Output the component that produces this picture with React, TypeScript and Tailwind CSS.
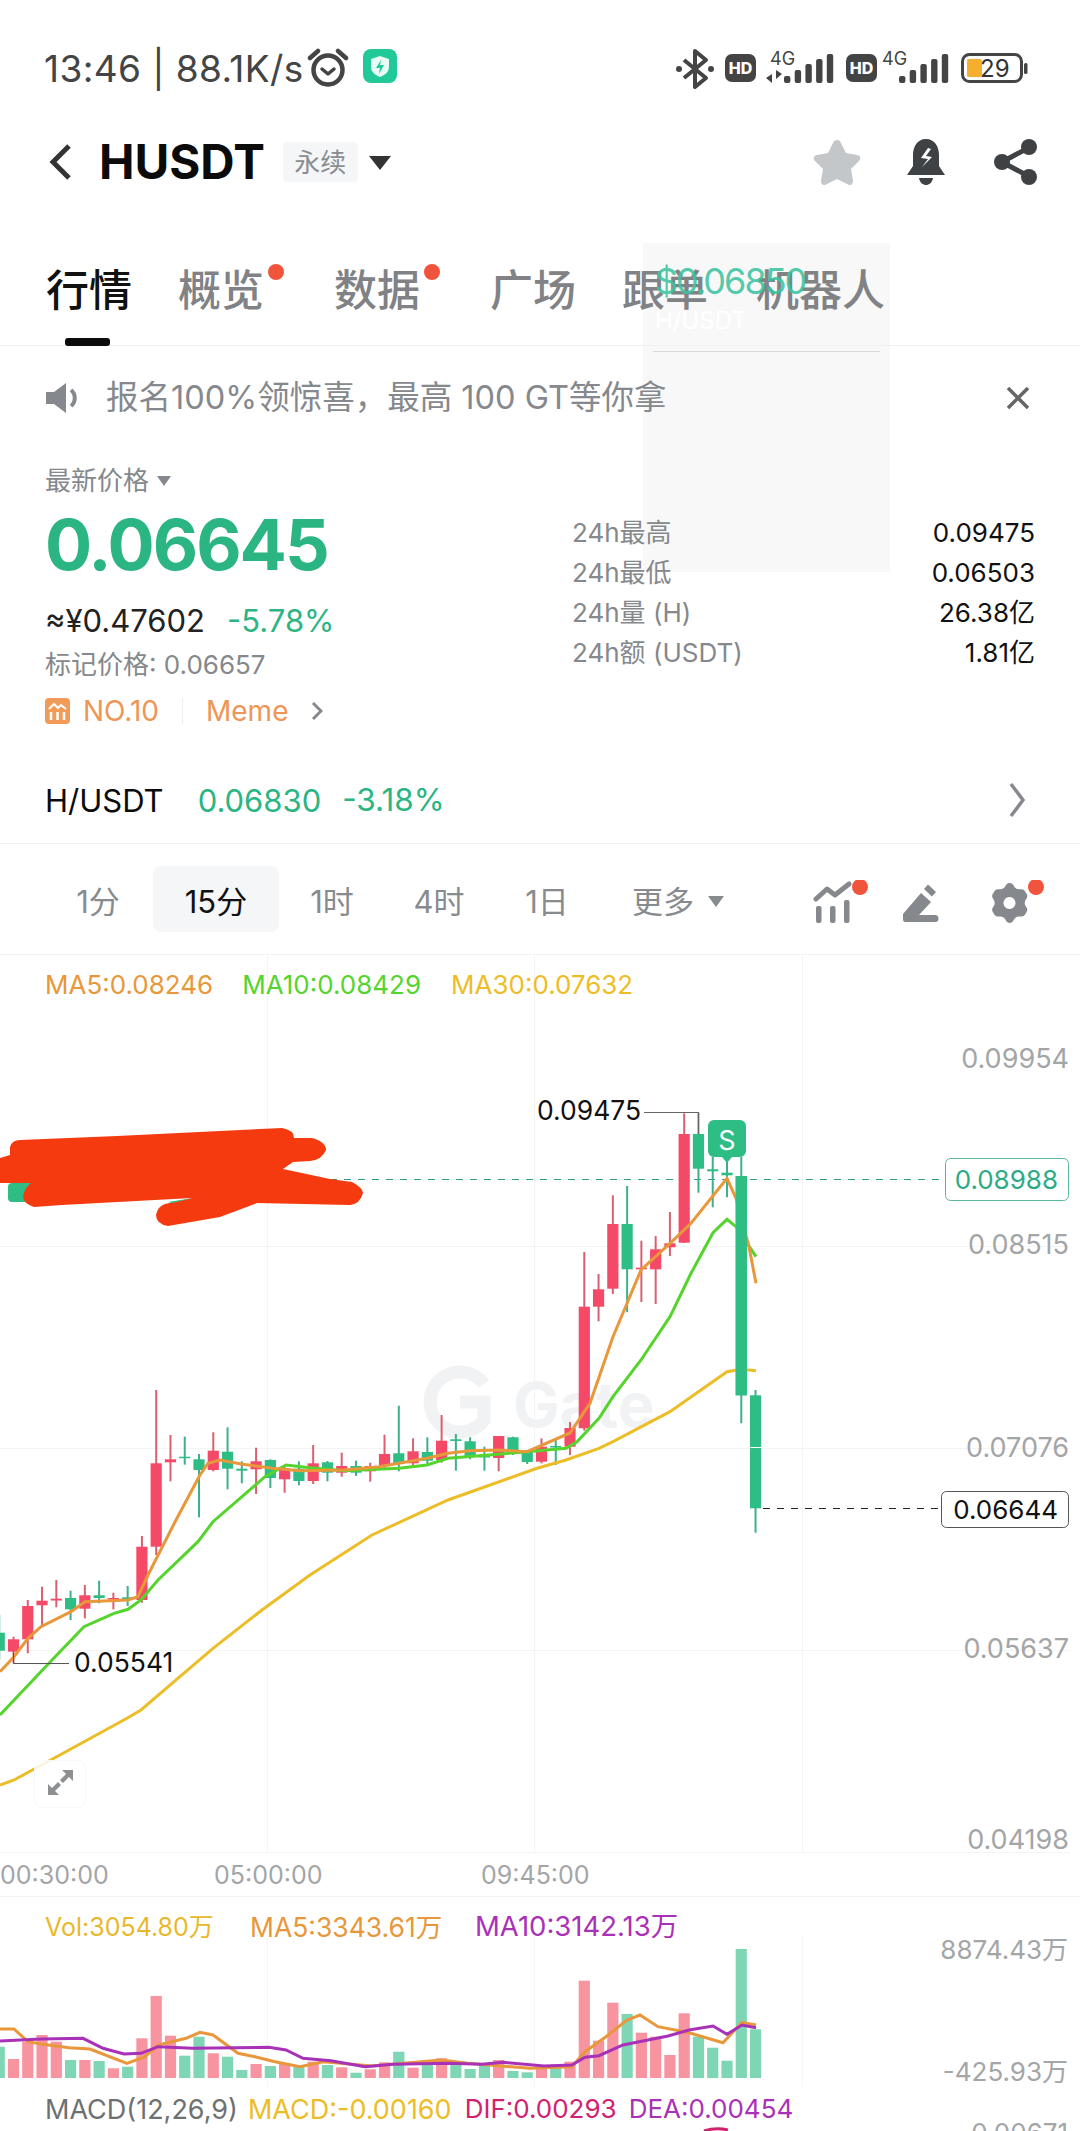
import type { ReactNode } from "react";

const RED = "#f54a67";
const GREEN = "#2dbd85";

// index, wick top, body top, body bottom, wick bottom, all in page px
const candles: [number, "r" | "g", number, number, number, number][] = [
  [-1, "g", 1615, 1632.7, 1650.7, 1660],
  [0, "r", 1636.7, 1639.3, 1651.7, 1663.3],
  [1, "r", 1600, 1606, 1639.3, 1653.3],
  [2, "r", 1586.7, 1600.7, 1605.3, 1626.7],
  [3, "r", 1580, 1598.7, 1600.5, 1607.3],
  [4, "g", 1590.7, 1598, 1609.3, 1620],
  [5, "r", 1585, 1595.3, 1608.7, 1618.3],
  [6, "g", 1580.7, 1595.3, 1598, 1603.3],
  [7, "r", 1592.7, 1598, 1599.5, 1609.3],
  [8, "g", 1586, 1597.3, 1599.3, 1606],
  [9, "r", 1536, 1546.7, 1600, 1602.7],
  [10, "r", 1390, 1463.3, 1546.7, 1555],
  [11, "r", 1435, 1459.3, 1462.3, 1481.3],
  [12, "g", 1436.7, 1456.7, 1458, 1464.7],
  [13, "g", 1454, 1459.3, 1470, 1517.3],
  [14, "r", 1432.3, 1450.7, 1470, 1471.3],
  [15, "g", 1427.3, 1451.7, 1468.7, 1489.3],
  [16, "g", 1461.3, 1468.7, 1470.7, 1483.3],
  [17, "r", 1447.7, 1461.3, 1469.3, 1494],
  [18, "g", 1459.3, 1460, 1478, 1488],
  [19, "r", 1465, 1468.3, 1479.3, 1492.7],
  [20, "g", 1461.3, 1468.7, 1481, 1485.3],
  [21, "r", 1445, 1463.3, 1481, 1484],
  [22, "g", 1461, 1462.3, 1472.7, 1481.3],
  [23, "r", 1452.7, 1466, 1472.7, 1476.7],
  [24, "g", 1460.7, 1466, 1472.7, 1476],
  [25, "r", 1462.7, 1466, 1471.3, 1481.7],
  [26, "r", 1434.7, 1454, 1465.3, 1468.3],
  [27, "g", 1405.7, 1453.3, 1464, 1471.3],
  [28, "r", 1438.3, 1451.3, 1463.3, 1466],
  [29, "g", 1437.3, 1452, 1460.7, 1464],
  [30, "r", 1415, 1440.7, 1460, 1462.7],
  [31, "g", 1434, 1439.3, 1441, 1470.7],
  [32, "g", 1437.3, 1441.3, 1456.7, 1459.3],
  [33, "g", 1446.7, 1456, 1457.3, 1470.7],
  [34, "r", 1436, 1436, 1458, 1471.3],
  [35, "g", 1436.7, 1437.3, 1452.7, 1455],
  [36, "g", 1450, 1452, 1462, 1464],
  [37, "r", 1438.3, 1446.7, 1461.7, 1463.3],
  [38, "g", 1440, 1446, 1447.3, 1465],
  [39, "r", 1422, 1428, 1446.7, 1455],
  [40, "r", 1252, 1306.7, 1428.3, 1430.7],
  [41, "r", 1274, 1289.3, 1306.7, 1321.3],
  [42, "r", 1195.3, 1224, 1288.7, 1294],
  [43, "g", 1186, 1224, 1269.3, 1312],
  [44, "r", 1240.7, 1267.7, 1269.3, 1302],
  [45, "r", 1236, 1249.3, 1269.3, 1304],
  [46, "r", 1212, 1243.3, 1247.3, 1256],
  [47, "r", 1113.3, 1134, 1242.7, 1243],
  [48, "g", 1112.3, 1134, 1168.7, 1192.7],
  [49, "g", 1156.7, 1169.3, 1171.3, 1207.3],
  [50, "g", 1158.3, 1172.7, 1175.3, 1197.3],
  [51, "g", 1156.7, 1176, 1395.3, 1423.3],
  [52, "g", 1390, 1395.3, 1508.3, 1532.7],
];

const ma5 =
  "0,1671.7 14,1656.7 28,1638.3 41,1626.7 71,1611.7 85,1601.7 128,1600 138,1596.7 148,1575 176,1520 200,1475 208,1463.3 220,1460 241,1464 272,1468.3 300,1470.7 344,1470 379,1466.7 427,1458.3 448,1453.3 470,1450.7 499,1450 527,1451.7 570,1433 590,1403.3 613,1336.7 641,1270 670,1243.3 691,1223.3 727,1178.3 736,1198.3 749,1246.7 756,1283.3";
const ma10 =
  "0,1715 52,1660 84,1626.7 114,1613.3 128,1609.3 141,1600 158,1580 198,1541.7 213,1521.7 265,1476.7 286,1465 310,1467.7 344,1470.7 399,1468.3 427,1465 448,1458.3 489,1455 527,1451.7 566,1448.3 577,1441.7 599,1418.3 613,1396.7 641,1360 670,1316.7 691,1273.3 713,1232.7 727,1219.3 736,1226.7 756,1256.7";
const ma30 =
  "0,1785 14,1780 69,1750 127,1718.3 141,1710 172,1683.3 213,1648.3 262,1610 310,1575 372,1535 448,1500 537,1468.3 566,1460 599,1448.3 613,1441.7 670,1411.7 727,1371.7 741,1369.3 756,1370.7";

const volTops: [number, "r" | "g"][] = [
  [2046.7, "g"], [2059, "r"], [2041.7, "r"], [2035, "r"], [2041.7, "r"], [2060, "g"], [2060, "r"], [2061, "g"],
  [2068.3, "r"], [2066.7, "g"], [2038.3, "r"], [1996, "r"], [2035.7, "r"], [2055.7, "g"], [2036.7, "g"], [2053.3, "r"],
  [2056.7, "g"], [2070, "g"], [2064, "r"], [2066, "g"], [2064, "r"], [2066.7, "g"], [2061.7, "r"], [2065, "g"],
  [2067.3, "r"], [2072.7, "g"], [2069.3, "r"], [2062.3, "r"], [2051.7, "g"], [2067.7, "r"], [2065, "g"], [2058.3, "r"],
  [2064, "g"], [2069, "g"], [2065, "g"], [2060, "r"], [2071, "g"], [2072.3, "g"], [2067.3, "r"], [2067.3, "g"],
  [2061.7, "r"], [1980.7, "r"], [2040.7, "r"], [2002.7, "r"], [2014, "g"], [2032.7, "r"], [2036.7, "r"], [2055, "r"],
  [2013.3, "r"], [2036.7, "g"], [2047.7, "g"], [2060.7, "g"], [1949, "g"], [2029.3, "g"],
];

const volMa5 =
  "0,2029 14,2029 28,2041.7 41,2044 69,2047.7 90,2049 127,2063.3 145,2056.7 158,2045 186,2038.3 200,2032.3 213,2035 238,2053.3 255,2056.7 275,2061.7 300,2066.7 323,2061.7 372,2066 441,2060 468,2063.3 530,2068.3 572,2066.7 585,2051.7 606,2036.7 627,2020 640,2015 658,2026.7 689,2032.7 723,2042.7 742,2022.3 756,2025";
const volMa10 =
  "0,2041 41,2039 83,2038.3 103,2048.3 124,2054 141,2053.3 158,2046.7 193,2048.3 269,2047.3 286,2050 303,2058.3 331,2060.7 365,2066.7 393,2064.3 448,2063.3 482,2064.3 503,2062.3 544,2066 572,2065 585,2057.3 599,2055.7 623,2045 668,2036 689,2030 713,2026 727,2034.3 742,2025 756,2027.7";

const candleX = (i: number) => 13.5 + 14.27 * i;

function Legend({ color, children, className = "" }: { color: string; children: ReactNode; className?: string }) {
  return (
    <span className={`whitespace-nowrap ${className}`} style={{ color }}>
      {children}
    </span>
  );
}

function SignalBars({ x = 0 }: { x?: number }) {
  const heights = [7, 13, 19, 24, 29];
  return (
    <g transform={`translate(${x},0)`}>
      {heights.map((h, i) => (
        <rect key={i} x={i * 10.7} y={33 - h} width={6.4} height={h} rx={2} fill="#444" />
      ))}
    </g>
  );
}

function StatusIcons() {
  return (
    <svg width="360" height="44" viewBox="0 0 360 44" className="block">
      {/* bluetooth */}
      <path d="M8 12 L30 30 L19 39 V3 L30 12 L8 30" fill="none" stroke="#444" strokeWidth="4" strokeLinejoin="round" />
      <circle cx="3" cy="21" r="3" fill="#444" />
      <circle cx="35" cy="21" r="3" fill="#444" />
      {/* hd + 4g + bars */}
      <rect x="49" y="6" width="31" height="28" rx="7" fill="#444" />
      <text x="64.5" y="26" textAnchor="middle" fontSize="16" fontWeight="800" fill="#fff">HD</text>
      <text x="94" y="17" fontSize="18" fill="#444">4G</text>
      <path d="M96 26 V35 L90 30 Z M100 22 V31 L106 26 Z" fill="#444" />
      <g transform="translate(0,2)"><SignalBars x={108} /></g>
      <rect x="170" y="6" width="31" height="28" rx="7" fill="#444" />
      <text x="185.5" y="26" textAnchor="middle" fontSize="16" fontWeight="800" fill="#fff">HD</text>
      <text x="206" y="17" fontSize="18" fill="#444">4G</text>
      <g transform="translate(0,2)"><SignalBars x={223} /></g>
      {/* battery */}
      <rect x="286.5" y="6.5" width="59" height="27" rx="7" fill="none" stroke="#444" strokeWidth="3" />
      <rect x="291" y="11" width="15" height="18" rx="2" fill="#f5ae2e" />
      <text x="304" y="29" fontSize="24" fill="#333">29</text>
      <rect x="348" y="15" width="3.5" height="11" rx="1.5" fill="#444" />
    </svg>
  );
}

function ToolbarIcons() {
  return (
    <svg width="240" height="44" viewBox="0 0 240 44" className="block">
      {/* indicators */}
      <g fill="#85888c">
        <rect x="3" y="26" width="5.5" height="17" rx="2" />
        <rect x="17" y="26" width="5.5" height="17" rx="2" />
        <rect x="31" y="20" width="5.5" height="23" rx="2" />
      </g>
      <path d="M3 19 L14 9 L22 15 L36 4" fill="none" stroke="#85888c" strokeWidth="5" strokeLinecap="round" strokeLinejoin="round" />
      <circle cx="47" cy="7" r="8" fill="#f0543c" />
      {/* pen */}
      <path d="M90 34 L108 13 L118 22 L106 35 H122 a2.5 2.5 0 0 1 0 7 H92 a2.5 2.5 0 0 1 -2 -2.5 Z" fill="#85888c" />
      <path d="M111 9 L115 4.5 L123 12 L119 16.5 Z" fill="#85888c" />
      {/* gear */}
      <g transform="translate(3,0)">
        <path
          fillRule="evenodd"
          fill="#85888c"
          d="M193 3 a4 4 0 0 1 4 1.5 l1.5 2.5 a6 6 0 0 0 4 2.3 h3 a4 4 0 0 1 3.6 2.2 l1.6 2.6 l0 0 a4 4 0 0 1 0 4 l-1.4 2.3 a6 6 0 0 0 0 5 l1.4 2.4 a4 4 0 0 1 0 4 l-1.6 2.6 a4 4 0 0 1 -3.6 2 h-3 a6 6 0 0 0 -4 2.4 l-1.5 2.4 a4 4 0 0 1 -6.6 0 l-1.5 -2.4 a6 6 0 0 0 -4 -2.4 h-3 a4 4 0 0 1 -3.6 -2 l-1.6 -2.6 a4 4 0 0 1 0 -4 l1.4 -2.4 a6 6 0 0 0 0 -5 l-1.4 -2.3 a4 4 0 0 1 0 -4 l1.6 -2.6 a4 4 0 0 1 3.6 -2.2 h3 a6 6 0 0 0 4 -2.3 l1.5 -2.5 a4 4 0 0 1 2.6 -1.5 Z M193.5 17 a6 6 0 1 0 0.01 0 Z"
        />
      </g>
      <circle cx="223" cy="7" r="8" fill="#f0543c" />
    </svg>
  );
}

export default function App() {
  return (
    <div className="relative w-[1080px] h-[2131px] overflow-hidden bg-white font-[Inter,'Noto_Sans_CJK_SC',sans-serif]">
      {/* leftover popup behind the page */}
      <div className="absolute left-[643px] top-[243px] w-[247px] h-[329px] bg-[#f8f8f8]">
        <div className="mt-[66px] ml-[12px] text-[24px] leading-none text-white">H/USDT</div>
        <div className="mt-[18px] mx-[10px] h-px bg-[#d8d9da]" />
      </div>

      {/* status bar */}
      <div className="relative h-[120px] pt-[48px] pl-[44px] pr-[44px] flex justify-between">
        <div className="flex items-start h-[44px]">
          <span className="text-[37px] leading-[42px] text-[#444] tracking-[0.4px] whitespace-nowrap">13:46 | 88.1K/s</span>
          <svg width="42" height="42" viewBox="0 0 42 42" className="ml-[3px] -mt-[2px]">
            <circle cx="21" cy="24" r="14.5" fill="none" stroke="#444" strokeWidth="4.5" />
            <path d="M15 23 L21 28 L27 23" fill="none" stroke="#444" strokeWidth="3.5" strokeLinecap="round" strokeLinejoin="round" />
            <path d="M3 12 L11 5 M39 12 L31 5" stroke="#444" strokeWidth="4.5" strokeLinecap="round" />
          </svg>
          <svg width="34" height="34" viewBox="0 0 34 34" className="ml-[14px] mt-[1px]">
            <rect width="34" height="34" rx="8" fill="#20c997" />
            <path d="M17 7 L26 10 V18 C26 23 22 26 17 28 C12 26 8 23 8 18 V10 Z" fill="#e8fbf4" />
            <path d="M18 11 L13 19 H17 L16 25 L21 16 H17 Z" fill="#20c997" />
          </svg>
        </div>
        <StatusIcons />
      </div>

      {/* header */}
      <div className="relative h-[84px] pl-[48px] pr-[42px] flex items-center">
        <svg width="26" height="38" viewBox="0 0 26 38">
          <path d="M21 3 L5 19 L21 35" fill="none" stroke="#333" strokeWidth="5" />
        </svg>
        <span className="ml-[25px] text-[47.5px] font-bold leading-none text-[#0b0b0b]">HUSDT</span>
        <span className="ml-[18px] w-[75px] h-[40px] flex items-center justify-center rounded-[4px] bg-[#f5f6f7] text-[26px] text-[#8a8d90]">永续</span>
        <svg width="22" height="14" viewBox="0 0 22 14" className="ml-[11px] mt-[2px]">
          <path d="M0 0 H22 L11 14 Z" fill="#333" />
        </svg>
        <div className="ml-auto flex items-center">
          <svg width="48" height="46" viewBox="0 0 48 46">
            <path d="M24 1 C26 1 27 2 28 4 L33 14 L44 16 C48 17 48 20 46 22 L38 30 L40 42 C40 46 37 47 34 45 L24 40 L14 45 C11 47 8 46 8 42 L10 30 L2 22 C0 20 0 17 4 16 L15 14 L20 4 C21 2 22 1 24 1 Z" fill="#c3c7ca" />
          </svg>
          <svg width="40" height="46" viewBox="0 0 40 46" className="ml-[45px]">
            <path d="M20 0 C29 0 33 8 33 16 V27 L39 36 H1 L7 27 V16 C7 8 11 0 20 0 Z" fill="#3f4245" />
            <path d="M13 39 H27 C26 44 23 46 20 46 C17 46 14 44 13 39 Z" fill="#3f4245" />
            <path d="M22 9 L15 19 L22 20 L16 28 L26 18 L20 17 L25 10 Z" fill="#fff" />
          </svg>
          <svg width="44" height="46" viewBox="0 0 44 46" className="ml-[48px]">
            <path d="M36 8 L8 23 L36 38" fill="none" stroke="#3f4245" strokeWidth="5" />
            <circle cx="35" cy="8" r="8" fill="#3f4245" />
            <circle cx="8" cy="23" r="8" fill="#3f4245" />
            <circle cx="35" cy="38" r="8" fill="#3f4245" />
          </svg>
        </div>
      </div>

      {/* tabs */}
      <div className="relative h-[142px] pl-[46px] flex items-start border-b border-[#eef0f1]">
        <div className="flex items-center gap-[46px] mt-[62px] text-[43px] leading-[48px] font-medium text-[#808285] whitespace-nowrap">
          <span className="relative text-[#111]">
            行情
            <span className="absolute left-[19px] top-[72px] w-[45px] h-[8px] rounded-[3px] bg-[#0b0b0b]" />
          </span>
          <span className="relative mr-[24px]">
            概览
            <span className="absolute left-[90px] top-[-2px] w-[16px] h-[16px] rounded-full bg-[#f0543c]" />
          </span>
          <span className="relative mr-[24px]">
            数据
            <span className="absolute left-[90px] top-[-2px] w-[16px] h-[16px] rounded-full bg-[#f0543c]" />
          </span>
          <span>广场</span>
          <span>跟单</span>
          <span className="ml-[2px]">机器人</span>
        </div>
        <span className="absolute left-[655px] top-[55px] text-[36px] leading-[44px] tracking-[-2px] text-[#3cc4a0]/90">$0.06850</span>
      </div>

      {/* notice */}
      <div className="relative h-[104px] pl-[46px] pr-[50px] flex items-center">
        <svg width="36" height="32" viewBox="0 0 36 32">
          <path d="M0 10 H8 L20 1 V31 L8 22 H0 Z" fill="#85888c" />
          <path d="M25 8 C30 12 30 20 25 24" fill="none" stroke="#85888c" strokeWidth="4" />
        </svg>
        <span className="ml-[24px] text-[32.5px] leading-none text-[#85888c] whitespace-nowrap">{"报名100%领惊喜\uFF0C最高 100 GT等你拿"}</span>
        <svg width="24" height="24" viewBox="0 0 24 24" className="ml-auto">
          <path d="M2 2 L22 22 M22 2 L2 22" stroke="#666" strokeWidth="3.5" />
        </svg>
      </div>

      {/* price */}
      <div className="relative h-[294px] pl-[45px] pr-[45px] flex justify-between">
        <div className="w-[480px]">
          <div className="h-[60px] flex items-center text-[26px] text-[#85888c]">
            最新价格
            <svg width="14" height="10" viewBox="0 0 14 10" className="ml-[8px] mt-[2px]">
              <path d="M0 0 H14 L7 10 Z" fill="#85888c" />
            </svg>
          </div>
          <div className="h-[70px] flex items-center text-[70px] leading-none font-bold tracking-[-2px] text-[#2bb582]">0.06645</div>
          <div className="h-[80px] flex items-center text-[31px] leading-none whitespace-nowrap">
            <span className="text-[#222]">≈¥0.47602</span>
            <span className="ml-[22px] text-[#2bb582]">-5.78%</span>
          </div>
          <div className="h-[10px] flex items-center text-[26px] leading-none text-[#85888c] whitespace-nowrap">标记价格: 0.06657</div>
          <div className="mt-[27px] flex items-center h-[28px] text-[28px] leading-none text-[#ef9555] whitespace-nowrap">
            <svg width="25" height="26" viewBox="0 0 25 26">
              <rect width="25" height="26" rx="4" fill="#f29a58" />
              <path d="M4 11 L9 6 L13 10 L16 7 L21 11" fill="none" stroke="#fff" strokeWidth="2" />
              <path d="M6 14 V22 M12.5 14 V22 M19 14 V22" stroke="#fff" strokeWidth="2.5" />
            </svg>
            <span className="ml-[13px]">NO.10</span>
            <span className="ml-[23px] w-px h-[26px] bg-[#eeeeee]" />
            <span className="ml-[23px]">Meme</span>
            <svg width="12" height="20" viewBox="0 0 12 20" className="ml-[23px]">
              <path d="M2 2 L10 10 L2 18" fill="none" stroke="#85888c" strokeWidth="3" />
            </svg>
          </div>
        </div>
        <div className="w-[463px] mt-[63px] flex flex-col text-[26px] leading-[40px]">
          {[
            ["24h最高", "0.09475"],
            ["24h最低", "0.06503"],
            ["24h量 (H)", "26.38亿"],
            ["24h额 (USDT)", "1.81亿"],
          ].map(([label, value]) => (
            <div key={label} className="flex justify-between h-[40px]">
              <span className="text-[#85888c]">{label}</span>
              <span className="text-[#111]">{value}</span>
            </div>
          ))}
        </div>
      </div>

      {/* pair row */}
      <div className="relative h-[100px] pt-[13px] pl-[45px] pr-[55px] flex items-center border-b border-[#f0f1f2] text-[31px] leading-none whitespace-nowrap">
        <span className="text-[#0b0b0b]">H/USDT</span>
        <span className="ml-[34px] text-[#2bb582]">0.06830</span>
        <span className="ml-[21px] text-[31.5px] text-[#2bb582]">-3.18%</span>
        <svg width="16" height="36" viewBox="0 0 16 36" className="ml-auto">
          <path d="M2 2 L14 18 L2 34" fill="none" stroke="#85888c" strokeWidth="3.5" />
        </svg>
      </div>

      {/* toolbar */}
      <div className="relative h-[111px] flex items-center border-b border-[#f1f2f3] text-[31px] leading-none text-[#888b8e] whitespace-nowrap">
        <span className="w-[153px] pl-[43px] pt-[4px] text-center">1分</span>
        <span className="w-[126px] h-[66px] pt-[4px] flex items-center justify-center rounded-[8px] bg-[#f5f6f7] text-[#111]">15分</span>
        <span className="w-[106px] pt-[4px] text-center">1时</span>
        <span className="w-[108px] pt-[4px] text-center">4时</span>
        <span className="w-[108px] pt-[4px] text-center">1日</span>
        <span className="ml-[31px] pt-[4px] flex items-center">
          更多
          <svg width="16" height="11" viewBox="0 0 16 11" className="ml-[14px]">
            <path d="M0 0 H16 L8 11 Z" fill="#888b8e" />
          </svg>
        </span>
        <span className="ml-[89px] mt-[6px]">
          <ToolbarIcons />
        </span>
      </div>

      {/* main chart */}
      <div className="relative h-[900px]">
        <div className="absolute left-[45px] top-[14px] flex text-[26px] leading-[32px]">
          <Legend color="#e8973a">MA5:0.08246</Legend>
          <Legend color="#55d42e" className="ml-[29px]">MA10:0.08429</Legend>
          <Legend color="#ecbd27" className="ml-[30px]">MA30:0.07632</Legend>
        </div>
        <svg width="1080" height="900" viewBox="0 955 1080 900" className="block font-[Inter,sans-serif]">
          {[1246, 1448, 1650, 1852].map((y) => (
            <line key={y} x1="0" x2="1070" y1={y + 0.5} y2={y + 0.5} stroke="#f3f4f5" />
          ))}
          {[267, 534, 802].map((x) => (
            <line key={x} x1={x + 0.5} x2={x + 0.5} y1="955" y2="1852" stroke="#f3f4f5" />
          ))}

          {/* watermark */}
          <path d="M484 1384 A30 30 0 1 0 484 1420 L484 1402 H460" fill="none" stroke="#f1f2f3" strokeWidth="13" />
          <text x="513" y="1427" fontSize="62" fontWeight="700" fill="#f1f2f3">Gate</text>

          {/* buy marker hidden under the scribble */}
          <rect x="8" y="1183" width="30" height="19" rx="4" fill={GREEN} />

          <line x1="330" x2="945" y1="1179.5" y2="1179.5" stroke="#2f9e80" strokeDasharray="7 7" strokeWidth="1" />
          <line x1="763" x2="941" y1="1508.5" y2="1508.5" stroke="#222" strokeDasharray="7 7" strokeWidth="1" />

          {candles.map(([i, c, wt, bt, bb, wb]) => {
            const x = candleX(i);
            const color = c === "r" ? RED : GREEN;
            return (
              <g key={i}>
                <line x1={x} x2={x} y1={wt} y2={wb} stroke={c === "r" ? "#d9606f" : "#3db08a"} strokeWidth="2" />
                <rect x={x - 5.6} y={bt} width="11.2" height={Math.max(bb - bt, 1.5)} fill={color} />
              </g>
            );
          })}
          <line x1={candleX(52) - 5.6} x2={candleX(52) + 5.6} y1="1447.5" y2="1447.5" stroke="#fff" />

          <polyline points={ma30} fill="none" stroke="#ecbd27" strokeWidth="3" />
          <polyline points={ma10} fill="none" stroke="#55d42e" strokeWidth="3" />
          <polyline points={ma5} fill="none" stroke="#e8973a" strokeWidth="3" />
          <rect x={candleX(51) - 5.6} y="1176" width="11.2" height="219.3" fill={GREEN} />

          {/* sell marker */}
          <path d="M714 1120 H740 a6 6 0 0 1 6 6 V1151 a6 6 0 0 1 -6 6 H732 L727 1163 L722 1157 H714 a6 6 0 0 1 -6 -6 V1126 a6 6 0 0 1 6 -6 Z" fill={GREEN} />
          <text x="727" y="1150" textAnchor="middle" fontSize="27" fill="#fff">S</text>

          {/* high / low */}
          <path d="M644 1112.5 H698.5 V1134" fill="none" stroke="#666" strokeWidth="1" />
          <text x="537" y="1120" fontSize="26.5" fill="#111">0.09475</text>
          <path d="M13.5 1652 V1663.5 H69" fill="none" stroke="#555" strokeWidth="1" />
          <text x="74" y="1672" fontSize="26.5" fill="#111">0.05541</text>

          {/* right axis */}
          <g fontSize="27" fill="#a3a5a7" textAnchor="end">
            <text x="1069" y="1068">0.09954</text>
            <text x="1069" y="1254">0.08515</text>
            <text x="1069" y="1457">0.07076</text>
            <text x="1069" y="1658">0.05637</text>
            <text x="1069" y="1849">0.04198</text>
          </g>

          {/* last price boxes */}
          <rect x="945.5" y="1158.5" width="123" height="42" rx="5" fill="#fff" stroke="#5bb79c" />
          <text x="1058" y="1189" textAnchor="end" fontSize="26" fill="#2bab85">0.08988</text>
          <rect x="941.5" y="1491.5" width="127" height="36" rx="5" fill="#fff" stroke="#555" />
          <text x="1058" y="1519" textAnchor="end" fontSize="26" fill="#111">0.06644</text>

          {/* censor scribble */}
          <path
            d="M0 1158 L10 1155 V1147 Q12 1140 20 1140 L117 1136 L282 1128 Q294 1130 294 1138 L312 1138 Q326 1142 326 1150 Q322 1160 310 1161 L293 1162 L283 1169 L330 1179 L352 1182 Q363 1188 363 1193 Q360 1204 350 1205 L257 1203 L220 1217 L168 1226 Q156 1224 156 1215 Q158 1206 165 1204 L192 1198 L62 1205 L34 1207 Q24 1204 23 1197 Q25 1187 31 1183 H0 Z"
            fill="#f63a10"
          />
          <path d="M168 1202 L193 1198 L172 1203 Z" fill={GREEN} />

          {/* fullscreen button */}
          <rect x="34.5" y="1760.5" width="51" height="47" rx="8" fill="#fff" fillOpacity="0.85" stroke="#f8f8f9" />
          <path d="M73 1770 H62 L66 1774 L60 1780 L63 1783 L69 1777 L73 1781 Z M48 1795 H59 L55 1791 L61 1785 L58 1782 L52 1788 L48 1784 Z" fill="#8e8f91" />
        </svg>
      </div>

      {/* time axis */}
      <div className="relative h-[42px] flex items-center border-b border-[#f1f2f3] text-[25px] leading-none text-[#a3a5a7]">
        <span className="w-[107px] text-center">00:30:00</span>
        <span className="ml-[107px] w-[107px] text-center">05:00:00</span>
        <span className="ml-[160px] w-[107px] text-center">09:45:00</span>
      </div>

      {/* volume */}
      <div className="relative h-[52px] pt-[8px] pl-[45px] flex items-center leading-none">
        <Legend color="#e9b82a" className="w-[205px] text-[25px]">Vol:3054.80万</Legend>
        <Legend color="#e8973a" className="w-[225px] text-[26.5px]">MA5:3343.61万</Legend>
        <Legend color="#a931b8" className="text-[27.5px]">MA10:3142.13万</Legend>
      </div>
      <svg width="1080" height="138" viewBox="0 1949 1080 138" className="relative block overflow-visible font-[Inter,'Noto_Sans_CJK_SC',sans-serif]">
        {[267, 534, 802].map((x) => (
          <line key={x} x1={x + 0.5} x2={x + 0.5} y1="1935" y2="2087" stroke="#f5f6f7" />
        ))}
        {volTops.map(([top, c], n) => (
          <rect key={n} x={candleX(n - 1) - 5.6} y={top} width="11.2" height={2078 - top} fill={c === "r" ? "#f7949f" : "#7fd6b5"} />
        ))}
        <polyline points={volMa5} fill="none" stroke="#e8973a" strokeWidth="3" />
        <polyline points={volMa10} fill="none" stroke="#a931b8" strokeWidth="3" />
        <g fontSize="26" fill="#a3a5a7" textAnchor="end">
          <text x="1068" y="1959">8874.43万</text>
          <text x="1068" y="2081">-425.93万</text>
          <text x="1068" y="2142">0.00671</text>
        </g>
        <path d="M704 2131 Q716 2127 728 2130" fill="none" stroke="#d0226f" strokeWidth="3" />
      </svg>

      {/* macd */}
      <div className="relative h-[44px] pl-[45px] flex items-center leading-none">
        <Legend color="#6e7072" className="text-[27px]">MACD(12,26,9)</Legend>
        <Legend color="#ecbd27" className="ml-[10px] text-[27px]">MACD:-0.00160</Legend>
        <Legend color="#d0226f" className="ml-[13px] text-[26px]">DIF:0.00293</Legend>
        <Legend color="#a931b8" className="ml-[12px] text-[26px]">DEA:0.00454</Legend>
      </div>
    </div>
  );
}
